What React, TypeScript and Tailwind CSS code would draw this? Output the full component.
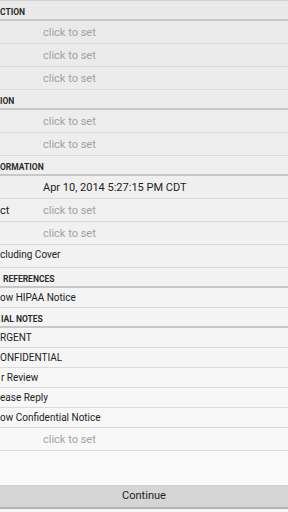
import type { ReactNode } from 'react';

function SectionHeader({ children, className = '' }: { children: ReactNode; className?: string }) {
  return (
    <div className="h-[20px] shrink-0 border-b-2 border-[#c8c8c8] pt-[6px] text-[8.5px] leading-[10px] font-bold uppercase text-[#2b2b2b] whitespace-nowrap">
      <div className={className}>{children}</div>
    </div>
  );
}

function FieldRow({ label = '', value, placeholder = false }: { label?: string; value: string; placeholder?: boolean }) {
  return (
    <div className="h-[23px] shrink-0 flex border-b border-[#dadada] pt-[1px] text-[11px] leading-[21px] whitespace-nowrap">
      <div className="w-[43px] shrink-0 text-[#222]">{label}</div>
      <div className={placeholder ? 'text-[#a2a2a2]' : 'text-[#222]'}>{value}</div>
    </div>
  );
}

function CheckRow({ children, className = '', tall = false }: { children: ReactNode; className?: string; tall?: boolean }) {
  return (
    <div
      className={`${tall ? 'h-[23px]' : 'h-[20px]'} shrink-0 border-b border-[#dadada] text-[10px] leading-[19px] text-[#222] whitespace-nowrap`}
    >
      <div className={className}>{children}</div>
    </div>
  );
}

export default function App() {
  return (
    <div className="w-[288px] h-[512px] overflow-hidden flex flex-col bg-linear-to-b from-[#e9e9e9] via-[#f2f2f2] to-[#fbfbfb] font-['Roboto',sans-serif]">
      <div className="h-[1px] shrink-0 bg-[#d2d2d2]" />

      <SectionHeader>CTION</SectionHeader>
      <FieldRow value="click to set" placeholder />
      <FieldRow value="click to set" placeholder />
      <FieldRow value="click to set" placeholder />

      <SectionHeader>ION</SectionHeader>
      <FieldRow value="click to set" placeholder />
      <FieldRow value="click to set" placeholder />

      <SectionHeader>ORMATION</SectionHeader>
      <FieldRow value="Apr 10, 2014 5:27:15 PM CDT" />
      <FieldRow label="ct" value="click to set" placeholder />
      <FieldRow value="click to set" placeholder />
      <CheckRow tall>cluding Cover</CheckRow>

      <SectionHeader className="pl-[3px]">REFERENCES</SectionHeader>
      <CheckRow>ow HIPAA Notice</CheckRow>

      <SectionHeader className="pl-[1px]">IAL NOTES</SectionHeader>
      <CheckRow>RGENT</CheckRow>
      <CheckRow>ONFIDENTIAL</CheckRow>
      <CheckRow className="pl-[1px]">r Review</CheckRow>
      <CheckRow>ease Reply</CheckRow>
      <CheckRow>ow Confidential Notice</CheckRow>
      <FieldRow value="click to set" placeholder />

      <div className="flex-1" />

      <button
        type="button"
        className="h-[24px] shrink-0 w-full bg-[#d5d5d5] border-b-2 border-[#b4b4b4] text-[11px] leading-[22px] text-[#1e1e1e]"
      >
        Continue
      </button>
      <div className="h-[3px] shrink-0 bg-[#f4f4f4]" />
    </div>
  );
}
